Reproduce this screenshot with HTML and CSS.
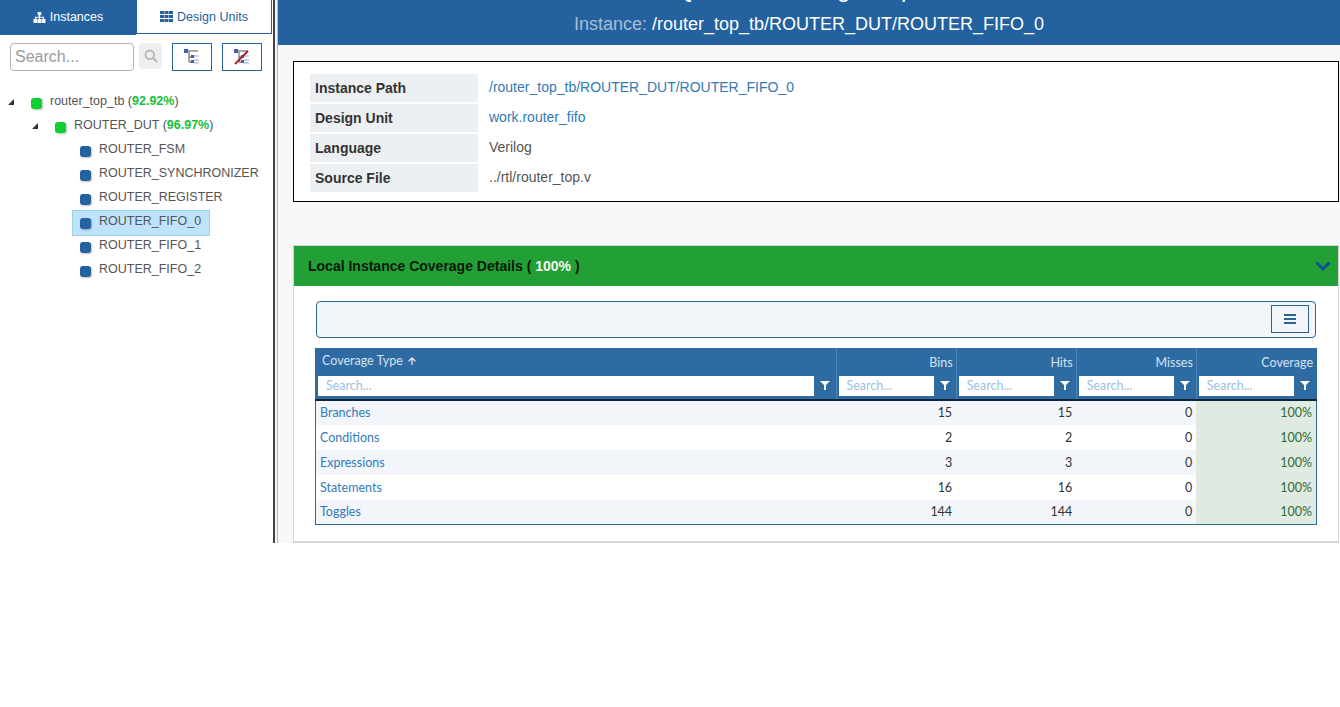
FILE: index.html
```html
<!DOCTYPE html>
<html lang="en">
<head>
  <meta charset="UTF-8" />
  <title>Coverage Report - ROUTER_FIFO_0</title>
  <link rel="stylesheet" href="styles.css">
</head>
<body>

  <div class="page">

    <!-- Left: hierarchy tree -->
    <div class="sidebar">
      <div class="tabs">
        <div class="tab active">
          <svg class="tab-icon" viewBox="0 0 14 12"><path d="M5 0h4v3.5H7.6V5.2H12v2.3h1.5V12h-4V7.500h1.200V6.400H7.600v1.100H9V12H5V7.500h1.400V6.400H3.300v1.100h1.200V12h-4V7.500H2V5.200h4.400V3.500H5z"/></svg>
          Instances
        </div>
        <div class="tab">
          <svg class="tab-icon" viewBox="0 0 13 11"><path d="M0 0h4v3H0zM4.500 0h4v3h-4zM9 0h4v3H9zM0 4h4v3H0zM4.500 4h4v3h-4zM9 4h4v3H9zM0 8h4v3H0zM4.500 8h4v3h-4zM9 8h4v3H9z"/></svg>
          Design Units
        </div>
      </div>

      <div class="tools">
        <input class="tree-search" type="text" placeholder="Search..." />
        <div class="search-btn">
          <svg viewBox="0 0 14 14" width="14" height="14"><circle cx="5.800" cy="5.800" r="4.300" fill="none" stroke="#b5b5b5" stroke-width="1.800"/><path d="M9 9l4 4" stroke="#b5b5b5" stroke-width="2.200"/></svg>
        </div>
        <div class="tool-btn">
          <svg viewBox="0 0 16 16" width="16" height="16">
            <path d="M3 2h11M5 3v10h2M5 8h2" fill="none" stroke="#555" stroke-width="1"/>
            <path d="M10 7h5M10 11h5M10 14h5" stroke="#9aa7c7" stroke-width="1"/>
            <path d="M0 0h4v4H0zM7 6h3v3H7zM7 11h3v3H7z" fill="#3f5fb5"/>
          </svg>
        </div>
        <div class="tool-btn">
          <svg viewBox="0 0 16 16" width="16" height="16">
            <path d="M3 2h11M5 3v10h2M5 8h2" fill="none" stroke="#555" stroke-width="1"/>
            <path d="M10 7h5M10 11h5M10 14h5" stroke="#9aa7c7" stroke-width="1"/>
            <path d="M0 0h4v4H0zM7 6h3v3H7zM7 11h3v3H7z" fill="#3f5fb5"/>
            <path d="M1 15L14 2" stroke="#a5262c" stroke-width="2"/>
          </svg>
        </div>
      </div>

      <ul class="tree">
        <li class="node">
          <span class="arrow"></span><span class="dot green"></span>
          <span class="label">router_top_tb (<b>92.92%</b>)</span>
        </li>
        <li class="node level1">
          <span class="arrow"></span><span class="dot green"></span>
          <span class="label">ROUTER_DUT (<b>96.97%</b>)</span>
        </li>
        <li class="node level2"><span class="dot"></span><span class="label">ROUTER_FSM</span></li>
        <li class="node level2"><span class="dot"></span><span class="label">ROUTER_SYNCHRONIZER</span></li>
        <li class="node level2"><span class="dot"></span><span class="label">ROUTER_REGISTER</span></li>
        <li class="node level2 selected"><span class="dot"></span><span class="label">ROUTER_FIFO_0</span></li>
        <li class="node level2"><span class="dot"></span><span class="label">ROUTER_FIFO_1</span></li>
        <li class="node level2"><span class="dot"></span><span class="label">ROUTER_FIFO_2</span></li>
      </ul>
    </div>

    <div class="splitter"></div>

    <!-- Right: instance details -->
    <div class="main">
      <div class="banner">
        <div class="banner-title">Questa Coverage Report</div>
        <div class="banner-sub">Instance: <span>/router_top_tb/ROUTER_DUT/ROUTER_FIFO_0</span></div>
      </div>

      <div class="info-box">
        <table class="info">
          <tr><th>Instance Path</th><td><a href="#">/router_top_tb/ROUTER_DUT/ROUTER_FIFO_0</a></td></tr>
          <tr><th>Design Unit</th><td><a href="#">work.router_fifo</a></td></tr>
          <tr><th>Language</th><td>Verilog</td></tr>
          <tr><th>Source File</th><td>../rtl/router_top.v</td></tr>
        </table>
      </div>

      <div class="panel">
        <div class="panel-head">
          <span>Local Instance Coverage Details ( <em>100%</em> )</span>
          <svg class="chevron" viewBox="0 0 16 10" width="16" height="10"><path d="M1.500 1.500L8 8l6.500-6.500" fill="none" stroke="#0f4f96" stroke-width="3"/></svg>
        </div>
        <div class="panel-body">
          <div class="grid-bar">
            <div class="menu-btn">
              <svg viewBox="0 0 12 10" width="12" height="10"><path d="M0 1h12M0 5h12M0 9h12" stroke="#2a6496" stroke-width="2"/></svg>
            </div>
          </div>

          <table class="grid">
            <colgroup>
              <col class="col-type" /><col class="col-num" /><col class="col-num" /><col class="col-num" /><col class="col-num" />
            </colgroup>
            <thead>
              <tr class="titles">
                <th class="left">Coverage Type <span class="sort">&#129129;</span></th>
                <th>Bins</th><th>Hits</th><th>Misses</th><th>Coverage</th>
              </tr>
              <tr class="filters">
                <th><div class="filter"><input type="text" placeholder="Search..." /><span class="funnel"><svg viewBox="0 0 10 9" width="10" height="9"><path d="M0 0h10L6 4v5H4V4z"/></svg></span></div></th>
                <th><div class="filter"><input type="text" placeholder="Search..." /><span class="funnel"><svg viewBox="0 0 10 9" width="10" height="9"><path d="M0 0h10L6 4v5H4V4z"/></svg></span></div></th>
                <th><div class="filter"><input type="text" placeholder="Search..." /><span class="funnel"><svg viewBox="0 0 10 9" width="10" height="9"><path d="M0 0h10L6 4v5H4V4z"/></svg></span></div></th>
                <th><div class="filter"><input type="text" placeholder="Search..." /><span class="funnel"><svg viewBox="0 0 10 9" width="10" height="9"><path d="M0 0h10L6 4v5H4V4z"/></svg></span></div></th>
                <th><div class="filter"><input type="text" placeholder="Search..." /><span class="funnel"><svg viewBox="0 0 10 9" width="10" height="9"><path d="M0 0h10L6 4v5H4V4z"/></svg></span></div></th>
              </tr>
            </thead>
            <tbody>
              <tr><td class="left"><a href="#">Branches</a></td><td>15</td><td>15</td><td>0</td><td class="good">100%</td></tr>
              <tr><td class="left"><a href="#">Conditions</a></td><td>2</td><td>2</td><td>0</td><td class="good">100%</td></tr>
              <tr><td class="left"><a href="#">Expressions</a></td><td>3</td><td>3</td><td>0</td><td class="good">100%</td></tr>
              <tr><td class="left"><a href="#">Statements</a></td><td>16</td><td>16</td><td>0</td><td class="good">100%</td></tr>
              <tr><td class="left"><a href="#">Toggles</a></td><td>144</td><td>144</td><td>0</td><td class="good">100%</td></tr>
            </tbody>
          </table>
        </div>
      </div>
    </div>
  </div>

</body>
</html>
```

FILE: styles.css
```css
* {
  box-sizing: border-box;
}
html, body {
  margin: 0;
  padding: 0;
  background: #fff;
}
body {
  font-family: "Liberation Sans", Arial, sans-serif;
  font-size: 14px;
  color: #444;
  height: 707px;
  overflow: hidden;
}
a {
  color: #337ab7;
  text-decoration: none;
}
.page {
  display: flex;
  height: 543px;
  overflow: hidden;
}

/* sidebar */
.sidebar {
  width: 273px;
  flex: none;
  background: #fff;
}
.tabs {
  display: flex;
  height: 35px;
}
.tab {
  width: 136px;
  height: 34px;
  display: flex;
  align-items: center;
  justify-content: center;
  gap: 4px;
  font-size: 12.5px;
  color: #23629f;
  border: 1px solid #23629f;
  border-top: none;
  background: #fff;
}
.tab.active {
  height: 35px;
  background: #23629f;
  color: #fff;
}
.tab-icon {
  width: 13px;
  height: 11px;
  fill: currentColor;
}
.tools {
  display: flex;
  align-items: flex-start;
  padding: 8px 0 0 10px;
  height: 55px;
}
.tree-search {
  width: 124px;
  height: 28px;
  border: 1px solid #b5b5b5;
  border-radius: 4px;
  padding: 0 4px;
  font-family: inherit;
  font-size: 16px;
  outline: none;
}
.tree-search::placeholder {
  color: #9a9a9a;
}
.search-btn {
  width: 23px;
  height: 26px;
  margin-left: 5px;
  background: #eee;
  border-radius: 4px;
  display: flex;
  align-items: center;
  justify-content: center;
}
.tool-btn {
  width: 40px;
  height: 28px;
  margin-left: 10px;
  border: 1px solid #2a6496;
  display: flex;
  align-items: center;
  justify-content: center;
}
.tool-btn + .tool-btn {
  margin-left: 10px;
}
.tree {
  list-style: none;
  margin: 0;
  padding: 0;
}
.node {
  display: flex;
  align-items: center;
  height: 24px;
  position: relative;
  padding-left: 8px;
  font-size: 12.5px;
  color: #555;
}
.node.level1 {
  padding-left: 32px;
}
.node.level2 {
  padding-left: 80px;
}
.arrow {
  width: 0;
  height: 0;
  flex: none;
  margin-right: 17px;
  border-left: 6px solid transparent;
  border-bottom: 6px solid #333;
}
.dot {
  width: 11px;
  height: 11px;
  flex: none;
  margin-right: 8px;
  margin-top: 2px;
  border-radius: 3px;
  background: #23629f;
  box-shadow: 1px 1px 2px rgba(0,0,0,0.25);
}
.dot.green {
  background: #0ed02e;
}
.label {
  white-space: nowrap;
  margin-top: -2px;
}
.node .label b {
  color: #12c23a;
}
.selected::before {
  content: "";
  position: absolute;
  left: 72px;
  top: 0;
  width: 136px;
  height: 24px;
  background: #bde4fb;
  border: 1px solid #9fcfe9;
}
.selected .dot, .selected .label {
  position: relative;
}

.splitter {
  width: 5px;
  flex: none;
  background: #f4f4f4;
  border-left: 2px solid #444;
  border-right: 1px solid #bbb;
}

/* main column */
.main {
  flex: 1;
  min-width: 0;
  background: #f8f8f8;
}
.banner {
  height: 45px;
  background: #23629f;
  text-align: center;
  overflow: hidden;
  position: relative;
}
.banner-title {
  position: absolute;
  left: 0;
  right: 0;
  top: -25px;
  font-size: 24px;
  color: #fff;
}
.banner-sub {
  margin-top: 13px;
  font-size: 18px;
  color: #a9bdd4;
  line-height: 22px;
}
.banner-sub span {
  color: #fff;
}
.info-box {
  margin: 16px 1px 0 15px;
  height: 141px;
  padding: 10px 16px;
  background: #fff;
  border: 1px solid #000;
}
.info {
  border-collapse: separate;
  border-spacing: 0 2px;
}
.info th {
  width: 168px;
  height: 28px;
  padding: 0 5px;
  text-align: left;
  font-size: 14px;
  background: #edf0f2;
  color: #333;
}
.info td {
  padding: 0 11px 3px;
  font-size: 14px;
  color: #555;
}
.info td a {
  color: #337ab7;
}

/* coverage panel */
.panel {
  margin: 43px 1px 0 15px;
  height: 298px;
  background: #fff;
  border: 1px solid #d4d4d4;
  border-bottom-width: 2px;
}
.panel-head {
  height: 40px;
  background: #23a035;
  display: flex;
  align-items: center;
  justify-content: space-between;
  padding: 0 7px 0 14px;
  font-size: 14px;
  font-weight: bold;
  color: #0a1a0a;
}
.panel-head em {
  font-style: normal;
  color: #f2f7f2;
}
.panel-body {
  padding: 15px 22px 0;
}
.grid-bar {
  height: 37px;
  background: #f2f6fa;
  border: 1px solid #2a6496;
  border-radius: 4px;
  display: flex;
  justify-content: flex-end;
  padding: 3px 6px 0 0;
}
.menu-btn {
  width: 38px;
  height: 28px;
  border: 1px solid #2a6496;
  display: flex;
  align-items: center;
  justify-content: center;
}
.grid {
  width: 1002px;
  margin: 10px 0 0 -1px;
  border-collapse: collapse;
  table-layout: fixed;
  font-family: Lato, sans-serif;
  font-size: 12.5px;
  border: 1px solid #2f6ba3;
}
.col-type {
  width: 520px;
}
.col-num {
  width: 120px;
}
.grid thead th {
  background: #2f6ba3;
  font-weight: normal;
  color: #d3e2f1;
  text-align: right;
  padding: 0 3px 0 2px;
  border-left: 1px solid #4f86b9;
}
.grid thead th:first-child {
  border-left: none;
}
.grid .titles th {
  height: 27px;
}
.grid .titles th.left {
  text-align: left;
  padding-left: 6px;
}
.sort {
  font-family: "DejaVu Sans", sans-serif;
  font-size: 11px;
  color: #fff;
  margin-left: 2px;
}
.grid .filters th {
  height: 23px;
  padding: 0 0 3px 2px;
  border-bottom: 2px solid #10243a;
}
.filter {
  display: flex;
  height: 20px;
}
.filter input {
  flex: 1;
  min-width: 0;
  border: none;
  padding: 0 8px;
  font-family: inherit;
  font-size: 12.5px;
  background: #fff;
  outline: none;
}
.filter input::placeholder {
  color: #9cc0e2;
}
.funnel {
  width: 22px;
  flex: none;
  display: flex;
  align-items: center;
  justify-content: center;
  fill: #fff;
}
.grid tbody td {
  height: 25px;
  padding: 0 4px 0 0;
  text-align: right;
  color: #333;
}
.grid tbody td.left {
  text-align: left;
  padding-left: 4px;
}
.grid tbody tr:nth-child(odd) {
  background: #f2f6fa;
}
.grid tbody td.good {
  background: #e0eae0;
  color: #2f6b35;
}
```
